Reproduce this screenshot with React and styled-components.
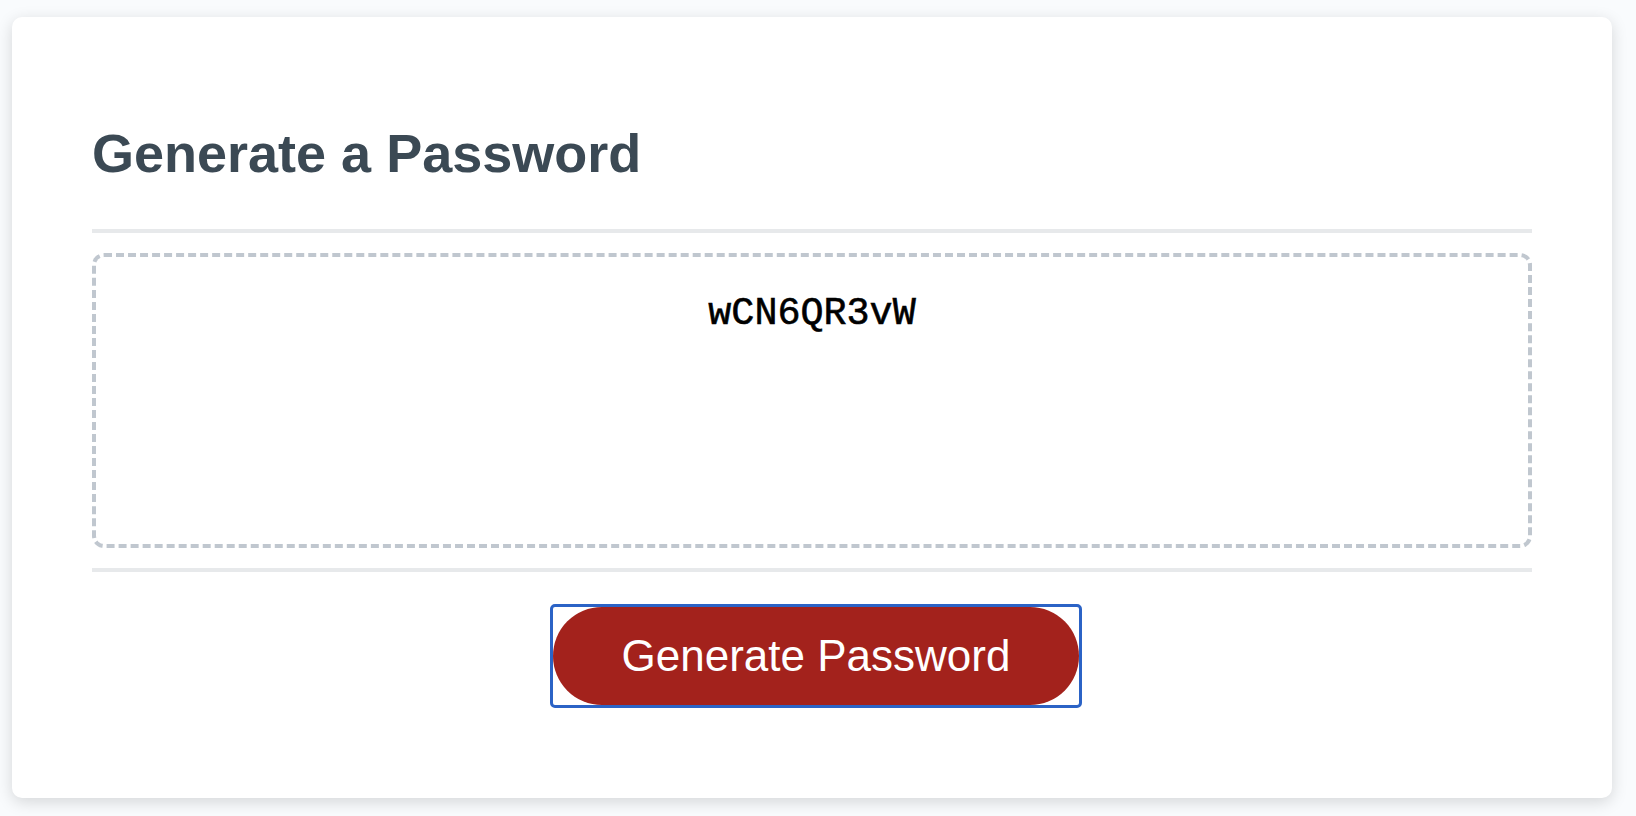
import styled, { createGlobalStyle } from "styled-components"

const GlobalStyle = createGlobalStyle`
    * {
        box-sizing: border-box;
    }
    body {
        margin: 0;
        background-color: #f9fbfd;
        font-family: "Liberation Sans", Arial, sans-serif;
    }
`

const Wrapper = styled.div`
    padding: 17px 24px 19px 12px;
`
const Card = styled.div`
    width: 1600px;
    background-color: #ffffff;
    border-radius: 10px;
    box-shadow: rgba(0, 0, 0, 0.15) 0px 4px 16px 0px;
    color: #3b4954;
    padding: 60px 80px;
`
const Header = styled.h2`
    margin: 45px 0;
    font-size: 54px;
    line-height: 62px;
    font-weight: 700;
`
const Rule = styled.div`
    width: 100%;
    height: 4px;
    background: #e7e9eb;
`
const PasswordBox = styled.textarea`
    appearance: none;
    display: block;
    width: 100%;
    height: 295px;
    margin: 20px 0;
    padding: 35px 30px 160px;
    font-family: "Liberation Mono", "Courier New", monospace;
    font-size: 38.4px;
    color: #000000;
    text-align: center;
    border: 4px dashed #c0c7cf;
    border-radius: 12px;
    resize: none;
    overflow: hidden;
    outline: none;
    -webkit-text-stroke: 0.6px #000000;
`
const Footer = styled.div`
    display: flex;
    justify-content: center;
`
const FocusFrame = styled.div`
    display: flex;
    margin: 32px 0 30px 8px;
    border: 3px solid #2b63c6;
    border-radius: 5px;
`
const Button = styled.button`
    border: none;
    background-color: #a3221c;
    border-radius: 50px;
    color: #ffffff;
    font-family: "Liberation Sans", Arial, sans-serif;
    font-size: 44px;
    line-height: 44px;
    padding: 27px 69px;
    text-align: center;
    cursor: pointer;
    outline: none;
`

export default function App(){
    return(
        <Wrapper>
            <GlobalStyle/>
            <Card>
                <Header>Generate a Password</Header>
                <Rule/>
                <PasswordBox readOnly value="wCN6QR3vW" aria-label="Generated Password"/>
                <Rule/>
                <Footer>
                    <FocusFrame>
                        <Button>Generate Password</Button>
                    </FocusFrame>
                </Footer>
            </Card>
        </Wrapper>
    )
}
